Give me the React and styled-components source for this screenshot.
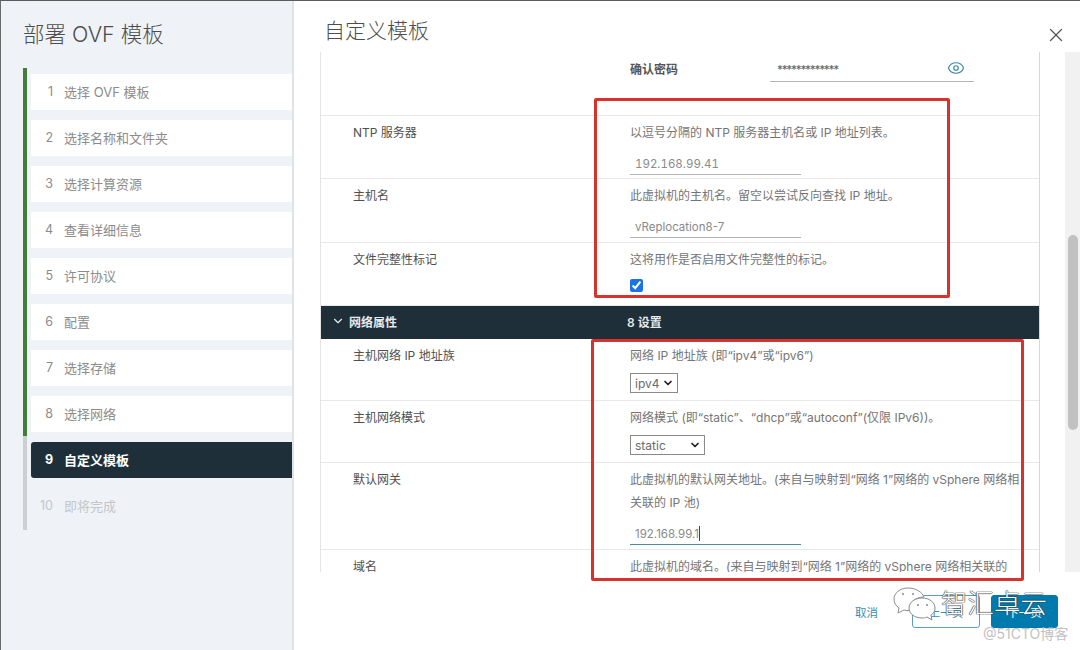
import React from "react";
import styled, { createGlobalStyle } from "styled-components";
import { Eye, X, ChevronDown } from "lucide-react";

const Global = createGlobalStyle`
  html, body { margin: 0; padding: 0; background: #fff; }
  body { font-family: Inter, "Noto Sans CJK SC", sans-serif; font-size: 12px; color: #565656; }
  * { box-sizing: border-box; }
`;

const Page = styled.div`
  position: relative;
  width: 1080px;
  height: 650px;
  overflow: hidden;
  display: grid;
  grid-template-columns: 293px 1fr;
  border-top: 1px solid #5c5c5c;
  border-left: 1px solid #6a6a6a;
`;

const Sidebar = styled.aside`
  background: #eff3f8;
  border-right: 2px solid #dfe3e7;
  padding: 0 0 0 22px;
`;
const SideTitle = styled.h1`
  margin: 0;
  height: 67px;
  padding-top: 17px;
  font-size: 21.5px;
  line-height: 32px;
  font-weight: 300;
  color: #4d4d4d;
`;
const Rail = styled.ol`
  list-style: none;
  margin: 0;
  padding: 6px 0 6px 8px;
  height: 462px;
  display: flex;
  flex-direction: column;
  gap: 10px;
  background:
    linear-gradient(#3f7f38, #3f7f38) 0 0 / 4px 368px no-repeat,
    linear-gradient(#cdd0d2, #cdd0d2) 0 0 / 4px 100% no-repeat;
`;
const Step = styled.li`
  height: 36px;
  padding-bottom: 2px;
  display: grid;
  grid-template-columns: 33px 1fr;
  align-items: center;
  font-size: 13px;
  border-radius: ${(p) => (p.$state === "active" ? "3px 0 0 3px" : "0")};
  background: ${(p) => (p.$state === "active" ? "#1f2f3a" : p.$state === "todo" ? "transparent" : "#fff")};
  color: ${(p) => (p.$state === "active" ? "#fff" : p.$state === "todo" ? "#c4c6c8" : "#8c8c8c")};
  font-weight: ${(p) => (p.$state === "active" ? 700 : 400)};
`;
const StepNo = styled.span`
  justify-self: end;
  padding-right: 11px;
  font-size: 12.5px;
`;

const Main = styled.main`
  display: flex;
  flex-direction: column;
  min-width: 0;
`;
const Header = styled.header`
  height: 51px;
  display: flex;
  justify-content: space-between;
  padding: 14px 13px 0 30px;
`;
const Title = styled.h2`
  margin: 0;
  font-size: 21px;
  line-height: 32px;
  font-weight: 300;
  color: #4d4d4d;
`;
const Close = styled.button`
  border: 0;
  background: none;
  padding: 0;
  width: 22px;
  height: 22px;
  margin-top: 9px;
  color: #555;
  display: flex;
`;
const Body = styled.div`
  height: 520px;
  display: flex;
  padding-left: 26px;
`;
const Scroller = styled.div`
  width: 720px;
  height: 520px;
  overflow: hidden;
  border-left: 1px solid #e4e4e4;
  border-right: 1px solid #d8d8d8;
`;
const Row = styled.div`
  height: ${(p) => p.$h}px;
  display: grid;
  grid-template-columns: 277px 1fr;
  padding: ${(p) => p.$pt ?? 5}px 10px 0 32px;
  border-bottom: 1px solid #e6e9ea;
`;
const Label = styled.div`
  line-height: 23px;
  color: #4f4f4f;
`;
const Value = styled.div`
  min-width: 0;
`;
const Desc = styled.div`
  line-height: 23px;
  color: #757575;
  white-space: nowrap;
`;
const StrongLabel = styled.div`
  line-height: 23px;
  font-weight: 600;
  color: #555;
`;
const Field = styled.div`
  position: relative;
  width: ${(p) => p.$w}px;
  height: 24px;
  margin-top: ${(p) => p.$mt ?? 7}px;
  border-bottom: 1px solid ${(p) => (p.$focus ? "#4d8ba0" : "#b5b5b5")};
`;
const FieldInput = styled.input`
  display: block;
  width: 100%;
  height: 100%;
  border: 0;
  outline: 0;
  background: none;
  padding: 2px 0 0 5px;
  font: inherit;
  font-size: 11.5px;
  font-variant-numeric: ${(p) => (p.$tabular ? "tabular-nums" : "normal")};
  color: #8a8a8a;
`;
const SecretInput = styled(FieldInput)`
  padding: 0 0 0 7px;
  font-weight: 500;
  letter-spacing: -1.3px;
  color: #666;
`;
const Caret = styled.i`
  position: absolute;
  left: 69px;
  top: 5px;
  width: 1px;
  height: 15px;
  background: #444;
`;
const EyeWrap = styled.span`
  position: absolute;
  right: 9px;
  top: 1px;
  color: #3f8aa3;
  display: flex;
`;
const Check = styled.input`
  display: block;
  width: 13px;
  height: 13px;
  margin: 8px 0 0;
  accent-color: #1a73e8;
`;
const SelectBox = styled.div`
  width: ${(p) => p.$w}px;
  height: 20px;
  margin-top: 6px;
  border: 1px solid #8a8a8a;
  background: #fff;
  display: flex;
  align-items: center;
  justify-content: space-between;
  padding: 0 3px 0 4px;
  font-size: 12px;
  color: #6a6a6a;
`;
const SectionBar = styled.div`
  height: 33px;
  padding: 0 0 3px 10px;
  display: grid;
  grid-template-columns: 296px 1fr;
  align-items: center;
  background: #1f2f3a;
  color: #e6e9ea;
  font-weight: 600;
`;
const SectionName = styled.div`
  display: flex;
  align-items: center;
  gap: 4px;
`;
const Track = styled.div`
  width: 15px;
  height: 520px;
  margin-left: 25px;
  background: #f1f1f1;
  padding: 183px 2px 0 3px;
`;
const Thumb = styled.div`
  height: 195px;
  border-radius: 5px;
  background: #c1c1c1;
`;
const Footer = styled.footer`
  display: flex;
  align-items: center;
  justify-content: flex-end;
  gap: 11px;
  padding: 23px 22px 0 0;
`;
const TextBtn = styled.button`
  border: 0;
  background: none;
  font: inherit;
  font-size: 11.5px;
  color: #3d8bab;
  padding: 0;
  margin-right: 23px;
`;
const Btn = styled.button`
  width: ${(p) => p.$w}px;
  height: 33px;
  border-radius: 3px;
  font: inherit;
  font-size: 11.5px;
  border: 1px solid ${(p) => (p.$primary ? "#0079ad" : "#5f9fb5")};
  background: ${(p) => (p.$primary ? "#0079ad" : "#fff")};
  color: ${(p) => (p.$primary ? "#fff" : "#3d8bab")};
`;
const Annotation = styled.div`
  position: absolute;
  left: ${(p) => p.$x}px;
  top: ${(p) => p.$y}px;
  width: ${(p) => p.$w}px;
  height: ${(p) => p.$h}px;
  border: 3px solid #d8322c;
  border-radius: 2px;
  pointer-events: none;
`;
const Watermark = styled.div`
  position: absolute;
  left: 890px;
  top: 584px;
  display: flex;
  align-items: center;
  gap: 4px;
  pointer-events: none;
`;
const WatermarkText = styled.span`
  font-size: 26.5px;
  font-weight: 300;
  line-height: 36px;
  color: #fff;
  text-shadow: 0 0 1px #333, 0 0 1px #333, 0 0 1px #333;
`;
const Credit = styled.span`
  position: absolute;
  left: 982px;
  top: 622px;
  font-size: 14px;
  color: #c2c2c2;
  pointer-events: none;
`;
const ConfirmGrid = styled.div`
  display: grid;
  grid-template-columns: 140px 204px;
  align-items: start;
`;

const steps = ["选择 OVF 模板", "选择名称和文件夹", "选择计算资源", "查看详细信息", "许可协议", "配置", "选择存储", "选择网络", "自定义模板", "即将完成"];

const Bubbles = () => (
  <svg width="46" height="36" viewBox="0 0 46 36" fill="#fff" stroke="#8c8c8c" strokeWidth="1">
    <path d="M17 3C9 3 3 8 3 14c0 4 2 7 5 9l-1 5 6-3c2 .6 4 .7 6 .6C18 18 24 12 33 12 31 7 25 3 17 3z" />
    <path d="M31 13c-7 0-13 4-13 10s6 10 13 10c2 0 3 0 5-1l5 3-1-5c3-2 4-4 4-7 0-6-6-10-13-10z" />
    <circle cx="12" cy="9" r="1" fill="#888" stroke="none" />
    <circle cx="22" cy="9" r="1" fill="#888" stroke="none" />
    <circle cx="27" cy="20" r="1" fill="#888" stroke="none" />
    <circle cx="36" cy="20" r="1" fill="#888" stroke="none" />
  </svg>
);

export default function App() {
  return (
    <>
      <Global />
      <Page>
        <Sidebar>
          <SideTitle>部署 OVF 模板</SideTitle>
          <Rail>
            {steps.map((s, i) => (
              <Step key={s} $state={i === 8 ? "active" : i === 9 ? "todo" : "done"}>
                <StepNo>{i + 1}</StepNo>
                <span>{s}</span>
              </Step>
            ))}
          </Rail>
        </Sidebar>
        <Main>
          <Header>
            <Title>自定义模板</Title>
            <Close aria-label="关闭"><X size={22} strokeWidth={1.4} /></Close>
          </Header>
          <Body>
            <Scroller>
              <Row $h={64} $pt={6}>
                <Label />
                <ConfirmGrid>
                  <StrongLabel>确认密码</StrongLabel>
                  <Field $w={204} $mt={0}>
                    <SecretInput readOnly value="*************" />
                    <EyeWrap><Eye size={18} strokeWidth={1.6} /></EyeWrap>
                  </Field>
                </ConfirmGrid>
              </Row>
              <Row $h={63}>
                <Label>NTP 服务器</Label>
                <Value>
                  <Desc>以逗号分隔的 NTP 服务器主机名或 IP 地址列表。</Desc>
                  <Field $w={171}><FieldInput $tabular readOnly value="192.168.99.41" /></Field>
                </Value>
              </Row>
              <Row $h={64}>
                <Label>主机名</Label>
                <Value>
                  <Desc>此虚拟机的主机名。留空以尝试反向查找 IP 地址。</Desc>
                  <Field $w={171}><FieldInput readOnly value="vReplocation8-7" /></Field>
                </Value>
              </Row>
              <Row $h={63}>
                <Label>文件完整性标记</Label>
                <Value>
                  <Desc>这将用作是否启用文件完整性的标记。</Desc>
                  <Check type="checkbox" readOnly checked />
                </Value>
              </Row>
              <SectionBar>
                <SectionName><ChevronDown size={14} strokeWidth={2} />网络属性</SectionName>
                <span>8 设置</span>
              </SectionBar>
              <Row $h={62}>
                <Label>主机网络 IP 地址族</Label>
                <Value>
                  <Desc>网络 IP 地址族 (即“ipv4”或“ipv6”)</Desc>
                  <SelectBox $w={48}>ipv4<ChevronDown size={12} strokeWidth={3.5} color="#222" /></SelectBox>
                </Value>
              </Row>
              <Row $h={62}>
                <Label>主机网络模式</Label>
                <Value>
                  <Desc>网络模式 (即“static”、“dhcp”或“autoconf”(仅限 IPv6))。</Desc>
                  <SelectBox $w={75}>static<ChevronDown size={12} strokeWidth={3.5} color="#222" /></SelectBox>
                </Value>
              </Row>
              <Row $h={87}>
                <Label>默认网关</Label>
                <Value>
                  <Desc>此虚拟机的默认网关地址。(来自与映射到“网络 1”网络的 vSphere 网络相</Desc>
                  <Desc>关联的 IP 池)</Desc>
                  <Field $w={171} $focus>
                    <FieldInput readOnly value="192.168.99.1" />
                    <Caret />
                  </Field>
                </Value>
              </Row>
              <Row $h={70}>
                <Label>域名</Label>
                <Value>
                  <Desc>此虚拟机的域名。(来自与映射到“网络 1”网络的 vSphere 网络相关联的</Desc>
                  <Desc>IP 池)</Desc>
                </Value>
              </Row>
            </Scroller>
            <Track><Thumb /></Track>
          </Body>
          <Footer>
            <TextBtn>取消</TextBtn>
            <Btn $w={68}>上一页</Btn>
            <Btn $w={67} $primary>下一页</Btn>
          </Footer>
        </Main>
        <Annotation $x={593} $y={97} $w={356} $h={200} />
        <Annotation $x={590} $y={338} $w={433} $h={242} />
        <Watermark>
          <Bubbles />
          <WatermarkText>智汇卓云</WatermarkText>
        </Watermark>
        <Credit>@51CTO博客</Credit>
      </Page>
    </>
  );
}
